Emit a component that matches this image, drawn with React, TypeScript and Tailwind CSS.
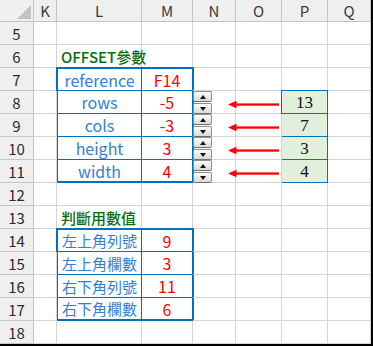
import React from "react";

const COLS = ["K", "L", "M", "N", "O", "P", "Q"];

const offsetRows = [
  { name: "reference", value: "F14" },
  { name: "rows", value: "-5" },
  { name: "cols", value: "-3" },
  { name: "height", value: "3" },
  { name: "width", value: "4" },
];

const resultRows = [
  { name: "左上角列號", value: "9" },
  { name: "左上角欄數", value: "3" },
  { name: "右下角列號", value: "11" },
  { name: "右下角欄數", value: "6" },
];

const results = ["13", "7", "3", "4"];

function Cell({ children, className = "" }: { children?: React.ReactNode; className?: string }) {
  return <div className={`border-r border-b border-[#d4d4d4] ${className}`}>{children}</div>;
}

function SpinButton({ up }: { up?: boolean }) {
  return (
    <div className="h-[11px] flex items-center justify-center rounded-[2px] border border-[#8e8e8e] border-b-[#6f6f6f] bg-linear-to-b from-[#fdfdfd] to-[#d9d9d9]">
      <svg width="6" height="4" viewBox="0 0 6 4">
        <path d={up ? "M3 0L6 4H0Z" : "M0 0H6L3 4Z"} fill="#111" />
      </svg>
    </div>
  );
}

function SpinCell() {
  return (
    <div className="relative border-r border-b border-[#d4d4d4]">
      <div className="flex flex-col gap-px w-[19px] h-[23px]">
        <SpinButton up />
        <SpinButton />
      </div>
      <svg className="absolute left-[35px] top-[9px]" width="52" height="9" viewBox="0 0 52 9">
        <path d="M0 4.5L8.5 0.8V8.2Z" fill="#ff0000" />
        <rect x="7" y="3.4" width="44" height="2.3" fill="#ff0000" />
      </svg>
    </div>
  );
}

function BlueTable({
  rows,
  heights,
  span,
}: {
  rows: { name: string; value: string }[];
  heights: string;
  span: string;
}) {
  return (
    <div className={`col-span-2 ${span} -ml-px -mr-px -mt-px border-2 border-[#0070c0] grid grid-cols-[84px_50px] ${heights}`}>
      {rows.map((r, i) => {
        const last = i === rows.length - 1;
        return (
          <React.Fragment key={r.name}>
            <div
              className={`flex items-center justify-center border-r border-[#0070c0] text-[#3380d2] ${
                last ? "" : "border-b"
              } ${/[a-z]/.test(r.name) ? "text-[16px]" : "text-[15px]"}`}
            >
              {r.name}
            </div>
            <div
              className={`flex items-center justify-center border-[#0070c0] text-[16px] text-[#ff0000] ${
                last ? "" : "border-b"
              }`}
            >
              {r.value}
            </div>
          </React.Fragment>
        );
      })}
    </div>
  );
}

export default function App() {
  const cells: React.ReactNode[] = [];

  cells.push(
    <div key="corner" className="relative border-r border-b border-[#c4c4c4] bg-[#efefef]">
      <svg className="absolute left-0 top-0" width="33" height="21" viewBox="0 0 33 21">
        <path d="M17 19H31V5Z" fill="#c3c3c3" />
      </svg>
    </div>
  );
  COLS.forEach((c) =>
    cells.push(
      <div
        key={`h${c}`}
        className="flex items-center justify-center border-r border-b border-[#c4c4c4] bg-[#efefef] text-[15px] text-[#3a3a3a]"
      >
        {c}
      </div>
    )
  );

  for (let r = 5; r <= 18; r++) {
    cells.push(
      <div
        key={`r${r}`}
        className="flex items-center justify-center border-r border-b border-[#c4c4c4] bg-[#efefef] text-[15px] text-[#2a2a2a]"
      >
        {r}
      </div>
    );
    cells.push(<Cell key={`K${r}`} />);

    if (r === 6 || r === 13) {
      cells.push(
        <Cell key={`L${r}`} className="flex items-center pl-[4px] text-[15px] font-medium text-[#086b10] whitespace-nowrap">
          {r === 6 ? "OFFSET參數" : "判斷用數值"}
        </Cell>
      );
      cells.push(<Cell key={`M${r}`} />);
    } else if (r === 7) {
      cells.push(
        <BlueTable key="t1" rows={offsetRows} span="row-span-5" heights="grid-rows-[22px_23px_23px_23px_21px]" />
      );
    } else if (r === 14) {
      cells.push(<BlueTable key="t2" rows={resultRows} span="row-span-4" heights="grid-rows-[22px_23px_23px_21px]" />);
    } else if (!((r >= 8 && r <= 11) || (r >= 15 && r <= 17))) {
      cells.push(<Cell key={`L${r}`} />);
      cells.push(<Cell key={`M${r}`} />);
    }

    if (r >= 8 && r <= 11) cells.push(<SpinCell key={`N${r}`} />);
    else cells.push(<Cell key={`N${r}`} />);

    cells.push(<Cell key={`O${r}`} />);

    if (r === 8) {
      cells.push(
        <div
          key="pt"
          className="row-span-4 -ml-px -mt-px border border-[#0070c0] bg-[#e2efda] grid grid-rows-[23px_23px_23px_22px]"
        >
          {results.map((v, i) => (
            <div
              key={i}
              className={`flex items-center justify-center border-[#0070c0] font-['Liberation_Serif',serif] text-[17px] text-[#111] ${
                i < results.length - 1 ? "border-b" : ""
              }`}
            >
              {v}
            </div>
          ))}
        </div>
      );
    } else if (!(r >= 9 && r <= 11)) {
      cells.push(<Cell key={`P${r}`} />);
    }

    cells.push(<Cell key={`Q${r}`} />);
  }

  return (
    <div className="w-[373px] h-[346px] bg-white border-r-2 border-b-2 border-black font-['Noto_Sans_CJK_TC','Noto_Sans',sans-serif] leading-none overflow-hidden">
      <div className="grid grid-cols-[34px_23px_85px_51px_43px_46px_46px_43px] grid-rows-[22px_repeat(14,23px)]">
        {cells}
      </div>
    </div>
  );
}
